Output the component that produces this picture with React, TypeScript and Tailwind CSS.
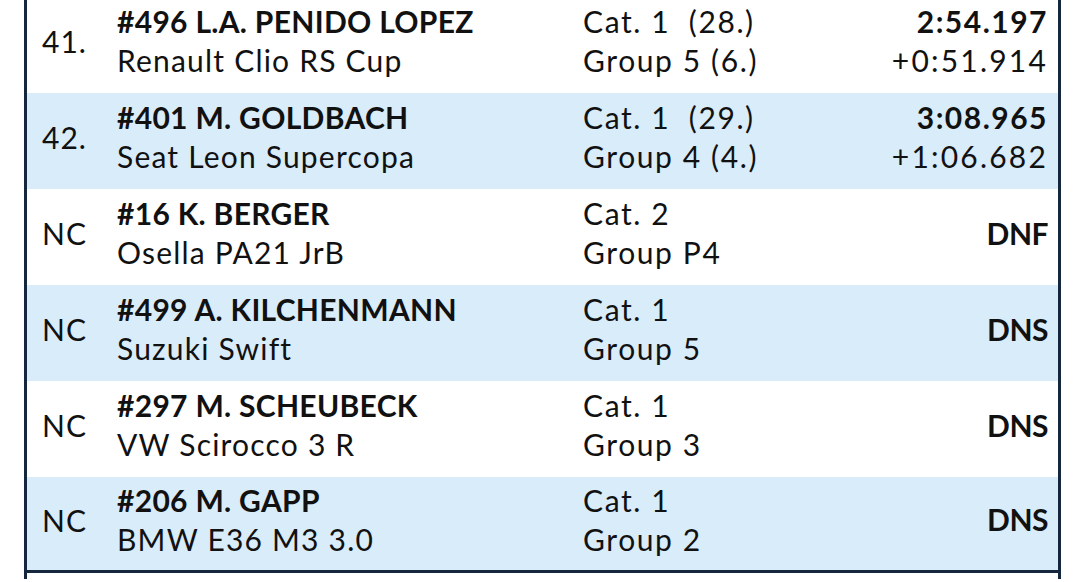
const rows = [
  { pos: "41.", name: "#496 L.A. PENIDO LOPEZ", car: "Renault Clio RS Cup", cat: "Cat. 1  (28.)", group: "Group 5 (6.)", time: "2:54.197", gap: "+0:51.914" },
  { pos: "42.", name: "#401 M. GOLDBACH", car: "Seat Leon Supercopa", cat: "Cat. 1  (29.)", group: "Group 4 (4.)", time: "3:08.965", gap: "+1:06.682" },
  { pos: "NC", name: "#16 K. BERGER", car: "Osella PA21 JrB", cat: "Cat. 2", group: "Group P4", time: "DNF", gap: "" },
  { pos: "NC", name: "#499 A. KILCHENMANN", car: "Suzuki Swift", cat: "Cat. 1", group: "Group 5", time: "DNS", gap: "" },
  { pos: "NC", name: "#297 M. SCHEUBECK", car: "VW Scirocco 3 R", cat: "Cat. 1", group: "Group 3", time: "DNS", gap: "" },
  { pos: "NC", name: "#206 M. GAPP", car: "BMW E36 M3 3.0", cat: "Cat. 1", group: "Group 2", time: "DNS", gap: "" },
];

export default function App() {
  return (
    <div className="w-[1080px] h-[582px] overflow-hidden bg-white text-[#111] font-['Lato',_'Open_Sans',_sans-serif]">
      <div className="ml-[24px] mr-[19px] h-full border-x-[3px] border-[#15273c] -mt-[3px]">
        {rows.map((r, i) => (
          <div
            key={i}
            className={`grid grid-cols-[75px_466px_1fr_auto] items-center h-[96px] pl-[15px] pr-[10px] pb-[8px] ${
              i % 2 === 1 ? "bg-[#d9ecfa]" : "bg-white"
            } ${i === rows.length - 1 ? "border-b-[3px] border-[#15273c]" : ""}`}
          >
            <div className="text-[30px] leading-none tracking-[1px]">{r.pos}</div>
            <div className="flex flex-col text-[30px] leading-[39px]">
              <span className="font-bold tracking-[0.3px]">{r.name}</span>
              <span className="tracking-[1.2px]">{r.car}</span>
            </div>
            <div className="flex flex-col text-[30px] leading-[39px] whitespace-pre tracking-[1.6px]">
              <span>{r.cat}</span>
              <span>{r.group}</span>
            </div>
            <div className="flex flex-col items-end text-[30px] leading-[39px]">
              <span className={`font-bold ${r.gap ? "tracking-[1.5px]" : "tracking-[-0.5px]"}`}>{r.time}</span>
              {r.gap && <span className="tracking-[2.2px]">{r.gap}</span>}
            </div>
          </div>
        ))}
      </div>
    </div>
  );
}
